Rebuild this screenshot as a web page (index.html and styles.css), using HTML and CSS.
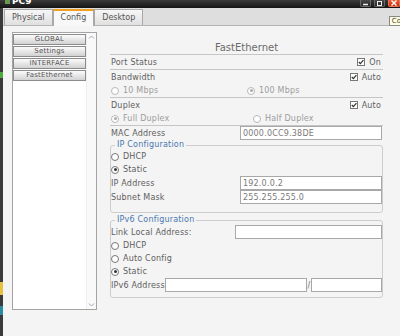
FILE: index.html
```html
<!DOCTYPE html>
<html lang="en">
<head>
  <meta charset="UTF-8">
  <title>PC9</title>
  <link rel="stylesheet" href="styles.css">
</head>
<body>
<div class="window">

  <!-- title bar, cut at the top -->
  <div class="titlebar">
    <span class="app-icon"></span>
    <span class="title">PC9</span>
    <span class="spacer"></span>
    <span class="wbtn"><svg width="7" height="5"><path d="M1 3.5h5" stroke="#eee" stroke-width="1.5"/></svg></span>
    <span class="wbtn"><svg width="7" height="5"><rect x="1.5" y="0.5" width="4" height="4" fill="none" stroke="#eee"/></svg></span>
    <span class="wbtn close"><svg width="8" height="6"><path d="M1.5 0.5l5 5M6.5 0.5l-5 5" stroke="#fff" stroke-width="1.4"/></svg></span>
  </div>

  <div class="frame">
    <div class="edge"></div>
    <div class="main">

      <div class="tabs">
        <div class="tab">Physical</div>
        <div class="tab active">Config</div>
        <div class="tab">Desktop</div>
        <div class="tip">Co</div>
      </div>

      <div class="content">
        <!-- left menu -->
        <div class="nav">
          <div class="nav-list">
            <div class="nav-btn">GLOBAL</div>
            <div class="nav-btn">Settings</div>
            <div class="nav-btn">INTERFACE</div>
            <div class="nav-btn">FastEthernet</div>
          </div>
          <div class="scroll">
            <span class="arrow"><svg width="9" height="9"><path d="M2 5.5l2.5-2.5 2.5 2.5" fill="none" stroke="#9ab" stroke-width="1"/></svg></span>
            <span class="arrow"><svg width="9" height="9"><path d="M2 3.5l2.5 2.5 2.5-2.5" fill="none" stroke="#9ab" stroke-width="1"/></svg></span>
          </div>
        </div>

        <!-- interface settings -->
        <div class="pane">
          <div class="pane-title">FastEthernet</div>

          <div class="row sep">
            <span>Port Status</span>
            <span class="check"><svg width="8" height="8"><rect x=".5" y=".5" width="7" height="7" fill="#fff" stroke="#777"/><path d="M1.8 4l1.6 1.7 3-3.6" fill="none" stroke="#333" stroke-width="1.2"/></svg>On</span>
          </div>

          <div class="row">
            <span>Bandwidth</span>
            <span class="check"><svg width="8" height="8"><rect x=".5" y=".5" width="7" height="7" fill="#fff" stroke="#777"/><path d="M1.8 4l1.6 1.7 3-3.6" fill="none" stroke="#333" stroke-width="1.2"/></svg>Auto</span>
          </div>
          <div class="row sep short">
            <span class="opt off bw-left"><span class="radio"></span>10 Mbps</span>
            <span class="opt off"><span class="radio on"></span>100 Mbps</span>
          </div>

          <div class="row">
            <span>Duplex</span>
            <span class="check"><svg width="8" height="8"><rect x=".5" y=".5" width="7" height="7" fill="#fff" stroke="#777"/><path d="M1.8 4l1.6 1.7 3-3.6" fill="none" stroke="#333" stroke-width="1.2"/></svg>Auto</span>
          </div>
          <div class="row sep short">
            <span class="opt off dx-left"><span class="radio on"></span>Full Duplex</span>
            <span class="opt off"><span class="radio"></span>Half Duplex</span>
          </div>

          <div class="row">
            <span>MAC Address</span>
            <input class="field mac" type="text" value="0000.0CC9.38DE">
          </div>

          <fieldset class="group ip">
            <legend>IP Configuration</legend>
            <div class="row short"><span class="opt"><span class="radio"></span>DHCP</span></div>
            <div class="row short"><span class="opt"><span class="radio on"></span>Static</span></div>
            <div class="row">
              <span>IP Address</span>
              <input class="field" type="text" value="192.0.0.2">
            </div>
            <div class="row">
              <span>Subnet Mask</span>
              <input class="field" type="text" value="255.255.255.0">
            </div>
          </fieldset>

          <fieldset class="group ipv6">
            <legend>IPv6 Configuration</legend>
            <div class="row">
              <span>Link Local Address:</span>
              <input class="field wide" type="text" value="">
            </div>
            <div class="row short"><span class="opt"><span class="radio"></span>DHCP</span></div>
            <div class="row short"><span class="opt"><span class="radio"></span>Auto Config</span></div>
            <div class="row short"><span class="opt"><span class="radio on"></span>Static</span></div>
            <div class="row">
              <span>IPv6 Address</span>
              <input class="field grow" type="text" value="">
              <span class="slash">/</span>
              <input class="field prefix" type="text" value="">
            </div>
          </fieldset>
        </div>
      </div>

    </div>
  </div>
</div>
</body>
</html>
```

FILE: styles.css
```css
body { margin: 0; font-family: "DejaVu Sans", sans-serif; }

.window {
  width: 400px;
  height: 336px;
  overflow: hidden;
  display: flex;
  flex-direction: column;
  background: #f4f4f4;
}

/* title bar */
.titlebar {
  height: 8px;
  flex: none;
  display: flex;
  align-items: flex-start;
  overflow: hidden;
  background: linear-gradient(#3a3a3a, #151515);
}
.app-icon { width: 5px; height: 4px; margin-left: 5px; background: #6a9a50; }
.title {
  color: #fff;
  font-weight: bold;
  font-size: 9px;
  line-height: 9px;
  margin: -3px 0 0 2px;
}
.spacer { flex: 1; }
.wbtn {
  width: 11px;
  height: 7px;
  box-sizing: border-box;
  margin-right: 3px;
  display: flex;
  align-items: center;
  justify-content: center;
  border: 1px solid #6a6a6a;
  border-top: none;
  border-radius: 0 0 2px 2px;
  background: linear-gradient(#4a4a4a, #252525);
}
.wbtn.close {
  width: 12px;
  margin-right: 0;
  border-color: #f07050;
  background: linear-gradient(#f05a30, #c83010);
}

.frame { flex: 1; display: flex; }
.edge {
  width: 3px;
  flex: none;
  background: linear-gradient(#3a3a3a 0 64px, #4caa40 64px 70px, #3a3a3a 70px 274px,
              #e8c040 274px 287px, #3a3a3a 287px 298px, #2a8aa0 298px 307px, #3a3a3a 307px);
}
.main { flex: 1; display: flex; flex-direction: column; }

/* tabs */
.tabs {
  position: relative;
  height: 17px;
  flex: none;
  display: flex;
  align-items: flex-end;
  padding-left: 1px;
  background: #dedede;
  border-bottom: 1px solid #b4b4b4;
}
.tab {
  height: 16px;
  box-sizing: border-box;
  padding: 0 7px;
  font-size: 8px;
  line-height: 15px;
  color: #555;
  border: 1px solid #a8a8a8;
  border-bottom: none;
  background: linear-gradient(#f6f6f6, #e0e0e0);
}
.tab.active {
  height: 17px;
  margin-bottom: -1px;
  border-top: 2px solid #f0a020;
  background: #f8f8f8;
  line-height: 14px;
}
.tip {
  position: absolute;
  right: -4px;
  top: 8px;
  height: 8px;
  padding: 0 2px;
  font-size: 7px;
  line-height: 8px;
  color: #444;
  background: #ffffe0;
  border: 1px solid #888;
}

.content { flex: 1; display: flex; }

/* left menu */
.nav {
  width: 85px;
  height: 278px;
  box-sizing: border-box;
  margin: 6px 0 0 9px;
  display: flex;
  border: 1px solid #a4a4a4;
  background: #fff;
}
.nav-list { width: 73px; padding-top: 1px; }
.nav-btn {
  height: 11px;
  box-sizing: border-box;
  margin-bottom: 1px;
  border: 1px solid #8c8c8c;
  background: linear-gradient(#fbfbfb, #d2d2d2);
  font-size: 7px;
  line-height: 9px;
  color: #555;
  text-align: center;
  letter-spacing: 0.2px;
}
.scroll {
  flex: 1;
  display: flex;
  flex-direction: column;
  justify-content: space-between;
  align-items: center;
  background: #f9f9f9;
  border-left: 1px solid #eee;
}
.arrow { display: flex; width: 9px; height: 9px; }

/* settings pane */
.pane {
  width: 273px;
  margin-left: 13px;
  padding-top: 15px;
  font-size: 8px;
  letter-spacing: 0.2px;
  color: #5e5e5e;
}
.pane-title {
  height: 13px;
  line-height: 13px;
  text-align: center;
  font-size: 10px;
  letter-spacing: 0;
  color: #6a6a6a;
  border-bottom: 1px solid #c6c6c6;
}
.row {
  height: 14px;
  display: flex;
  align-items: center;
  justify-content: space-between;
  white-space: nowrap;
}
.row.short { height: 13px; justify-content: flex-start; }
.row.sep { border-bottom: 1px solid #c6c6c6; }
.row > span:first-child { padding-left: 1px; }

.check { display: flex; align-items: center; gap: 4px; margin-right: 2px; }
.opt { display: flex; align-items: center; }
.opt.off { color: #9c9c9c; }
.bw-left { width: 136px; }
.dx-left { width: 142px; }

.radio {
  width: 8px;
  height: 8px;
  box-sizing: border-box;
  margin-right: 4px;
  border: 1px solid #777;
  border-radius: 50%;
  background: #fff;
  display: flex;
  align-items: center;
  justify-content: center;
}
.radio.on::after {
  content: "";
  width: 3px;
  height: 3px;
  border-radius: 50%;
  background: #333;
}
.off .radio { border-color: #b8b8b8; }
.off .radio.on::after { background: #aaa; }

.field {
  width: 142px;
  height: 14px;
  box-sizing: border-box;
  margin: 0;
  padding: 0 2px;
  border: 1px solid #a8a8a8;
  background: #fff;
  font-family: "DejaVu Sans", sans-serif;
  font-size: 8px;
  letter-spacing: 0.2px;
  color: #7a7a7a;
}
.field.mac { margin-right: 1px; }
.field.wide { width: 147px; }
.field.grow { flex: 1; min-width: 0; }
.field.prefix { width: 71px; }
.slash { width: 4px; text-align: center; color: #777; }

.group {
  margin: 0;
  padding: 0 0 8px 0;
  border: 1px solid #cdcdcd;
  border-radius: 3px;
}
.group.ipv6 { margin-top: 2px; padding-bottom: 5px; }
.group legend {
  margin-left: 4px;
  padding: 0 2px;
  font-size: 8px;
  line-height: 10px;
  color: #4a78b0;
}
.group .row > span:first-child { padding-left: 0; }
```
